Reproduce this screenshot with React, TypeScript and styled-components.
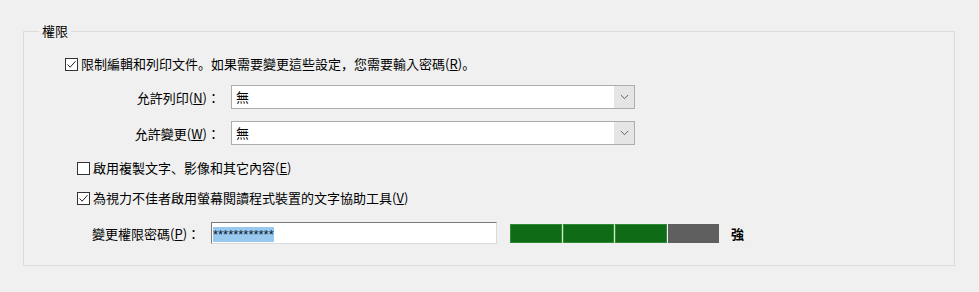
import styled, { createGlobalStyle } from "styled-components";

const GlobalStyle = createGlobalStyle`
  html, body {
    margin: 0;
    padding: 0;
    background: #f0f0f0;
  }
  body {
    font-family: "Noto Sans CJK TC", "Noto Sans", sans-serif;
    font-size: 13px;
    color: #000;
  }
`;

const Page = styled.div`
  width: 979px;
  height: 292px;
  box-sizing: border-box;
  padding: 31px 0 0 23px;
`;

const Group = styled.section`
  position: relative;
  width: 932px;
  height: 235px;
  box-sizing: border-box;
  border: 1px solid #dcdcdc;
  padding: 22px 0 0 41px;
  display: flex;
  flex-direction: column;
`;

const Legend = styled.span`
  position: absolute;
  top: -9px;
  left: 15px;
  padding: 0 3px;
  background: #f0f0f0;
  line-height: 16px;
`;

const CheckRow = styled.label<{ $top?: number; $indent?: number }>`
  display: flex;
  align-items: center;
  gap: 3px;
  height: 20px;
  line-height: 20px;
  margin-top: ${(p) => p.$top ?? 0}px;
  margin-left: ${(p) => p.$indent ?? 0}px;
  white-space: nowrap;
`;

// punctuation sits in the lower-left of its cell in the original dialog
const Punct = styled.span`
  font-family: "Noto Sans CJK SC", "Noto Sans CJK TC", sans-serif;
`;

const Box = styled.span`
  display: inline-flex;
  align-items: center;
  justify-content: center;
  width: 13px;
  height: 13px;
  box-sizing: border-box;
  border: 1px solid #333;
  background: #fff;
  flex: none;
`;

const FieldRow = styled.div<{ $top: number }>`
  display: flex;
  align-items: center;
  margin-top: ${(p) => p.$top}px;
  margin-left: 35px;
`;

const FieldLabel = styled.span`
  width: 120px;
  margin-right: 11px;
  text-align: right;
  white-space: nowrap;
`;

const Select = styled.div`
  display: flex;
  width: 404px;
  height: 24px;
  box-sizing: border-box;
  border: 1px solid #adadad;
  background: #fff;
`;

const SelectValue = styled.span`
  flex: 1;
  padding-left: 4px;
  line-height: 22px;
`;

const SelectButton = styled.span`
  width: 20px;
  display: flex;
  align-items: center;
  justify-content: center;
  background: #e5e5e5;
`;

const PasswordRow = styled.div`
  display: flex;
  align-items: center;
  margin-top: 14px;
  margin-left: 27px;
`;

const PasswordLabel = styled.span`
  width: 119px;
  white-space: nowrap;
`;

const PasswordInput = styled.div`
  width: 286px;
  height: 22px;
  box-sizing: border-box;
  padding: 1px 1px;
  border: 1px solid;
  border-color: #7a7a7a #dadada #dadada #7a7a7a;
  background: #fff;
`;

const Selected = styled.span`
  display: inline-block;
  height: 15px;
  line-height: 15px;
  background: #99c9ef;
  color: #0c1a2c;
  font-family: "Liberation Sans", Arial, sans-serif;
  font-size: 13px;
`;

const Meter = styled.div`
  display: flex;
  gap: 1px;
  width: 209px;
  height: 19px;
  margin-left: 13px;
  background: #cfe8cf;
`;

const Segment = styled.span<{ $on: boolean }>`
  flex: 1;
  background: ${(p) => (p.$on ? "#0f6b15" : "#5f5f5f")};
  box-shadow: ${(p) => (p.$on ? "inset 0 0 0 1px #2f8a35" : "0 0 0 1px #f0f0f0")};
`;

const Strength = styled.span`
  margin-left: 12px;
  font-weight: 700;
`;

function Check({ checked }: { checked?: boolean }) {
  return (
    <Box>
      {checked && (
        <svg width="11" height="11" viewBox="0 0 11 11">
          <path d="M1.5 5.5 L4.2 8.2 L9.5 2.2" fill="none" stroke="#222" strokeWidth="1" />
        </svg>
      )}
    </Box>
  );
}

function Dropdown({ value }: { value: string }) {
  return (
    <Select>
      <SelectValue>{value}</SelectValue>
      <SelectButton>
        <svg width="9" height="6" viewBox="0 0 9 6">
          <path d="M0.8 1 L4.5 4.7 L8.2 1" fill="none" stroke="#606060" strokeWidth="1" />
        </svg>
      </SelectButton>
    </Select>
  );
}

export default function App() {
  return (
    <>
      <GlobalStyle />
      <Page>
        <Group>
          <Legend>權限</Legend>
          <CheckRow>
            <Check checked />
            <span>
              限制編輯和列印文件<Punct>。</Punct>如果需要變更這些設定<Punct>，</Punct>您需要輸入密碼(<u>R</u>)<Punct>。</Punct>
            </span>
          </CheckRow>
          <FieldRow $top={11}>
            <FieldLabel>
              允許列印(<u>N</u>)：
            </FieldLabel>
            <Dropdown value="無" />
          </FieldRow>
          <FieldRow $top={12}>
            <FieldLabel>
              允許變更(<u>W</u>)：
            </FieldLabel>
            <Dropdown value="無" />
          </FieldRow>
          <CheckRow $top={13} $indent={12}>
            <Check />
            <span>
              啟用複製文字<Punct>、</Punct>影像和其它內容(<u>E</u>)
            </span>
          </CheckRow>
          <CheckRow $top={10} $indent={12}>
            <Check checked />
            <span>
              為視力不佳者啟用螢幕閱讀程式裝置的文字協助工具(<u>V</u>)
            </span>
          </CheckRow>
          <PasswordRow>
            <PasswordLabel>
              變更權限密碼(<u>P</u>)：
            </PasswordLabel>
            <PasswordInput>
              <Selected>************</Selected>
            </PasswordInput>
            <Meter>
              {[true, true, true, false].map((on, i) => (
                <Segment key={i} $on={on} />
              ))}
            </Meter>
            <Strength>強</Strength>
          </PasswordRow>
        </Group>
      </Page>
    </>
  );
}
